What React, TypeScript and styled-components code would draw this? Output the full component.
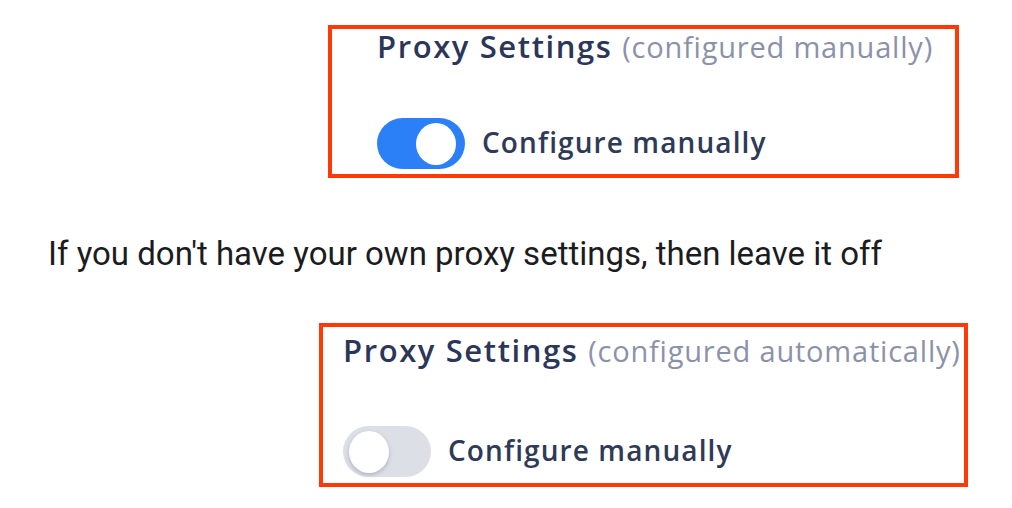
import React from "react";
import styled, { createGlobalStyle } from "styled-components";

const GlobalStyle = createGlobalStyle`
    html, body {
        margin: 0;
        padding: 0;
        background: #ffffff;
    }
`;

const Page = styled.div`
    display: flex;
    flex-direction: column;
    align-items: flex-start;
    width: 1012px;
    height: 508px;
    overflow: hidden;
`;

const Frame = styled.section<{ $left: number; $top: number; $w: number; $h: number; $pad: number }>`
    box-sizing: border-box;
    margin: ${p => p.$top}px 0 0 ${p => p.$left}px;
    width: ${p => p.$w}px;
    height: ${p => p.$h}px;
    padding: 0 0 0 ${p => p.$pad}px;
    border: 4px solid #ff3a06;
    overflow: hidden;
    display: flex;
    flex-direction: column;
    font-family: "Open Sans", "Noto Sans", sans-serif;
`;

const Title = styled.h2<{ $top: number }>`
    margin: ${p => p.$top}px 0 0 0;
    white-space: nowrap;
    font-size: 31px;
    line-height: 34px;
    font-weight: 600;
    color: #2b3659;
    letter-spacing: 1.6px;
`;

const Hint = styled.span`
    font-size: 29px;
    font-weight: 400;
    color: #8c91aa;
    letter-spacing: 0.8px;
`;

const Row = styled.label<{ $top: number }>`
    display: flex;
    align-items: center;
    gap: 17px;
    margin-top: ${p => p.$top}px;
`;

const Track = styled.span<{ $on: boolean }>`
    box-sizing: border-box;
    display: flex;
    align-items: center;
    justify-content: ${p => (p.$on ? "flex-end" : "flex-start")};
    width: 88px;
    height: 51px;
    padding: 0 ${p => (p.$on ? 9 : 6)}px;
    border-radius: 26px;
    background: ${p => (p.$on ? "#2b80f7" : "#dddfe7")};
`;

const Knob = styled.span<{ $on: boolean }>`
    width: 40px;
    height: 42px;
    border-radius: 50%;
    background: #ffffff;
    box-shadow: ${p => (p.$on ? "none" : "0 2px 4px rgba(40, 50, 80, 0.25)")};
`;

const Label = styled.span`
    font-size: 28px;
    font-weight: 600;
    color: #2f3a57;
    letter-spacing: 1.1px;
    white-space: nowrap;
    margin-top: -3px;
`;

const Note = styled.p`
    margin: 57px 0 0 48px;
    font-family: "Roboto", "Liberation Sans", sans-serif;
    font-size: 33px;
    line-height: 38px;
    color: #1c1c1e;
    white-space: nowrap;
`;

function ProxyToggle(prop: { on: boolean; mode: string; titleTop: number; rowTop: number }) {
    return <>
        <Title $top={prop.titleTop}>Proxy Settings <Hint>({prop.mode})</Hint></Title>
        <Row $top={prop.rowTop}>
            <Track $on={prop.on}><Knob $on={prop.on} /></Track>
            <Label>Configure manually</Label>
        </Row>
    </>;
}

export default function App() {
    return <>
        <GlobalStyle />
        <Page>
            <Frame $left={328} $top={25} $w={631} $h={153} $pad={45}>
                <ProxyToggle on={true} mode="configured manually" titleTop={0} rowTop={54} />
            </Frame>
            <Note>If you don't have your own proxy settings, then leave it off</Note>
            <Frame $left={319} $top={50} $w={649} $h={164} $pad={20}>
                <ProxyToggle on={false} mode="configured automatically" titleTop={6} rowTop={58} />
            </Frame>
        </Page>
    </>;
}
